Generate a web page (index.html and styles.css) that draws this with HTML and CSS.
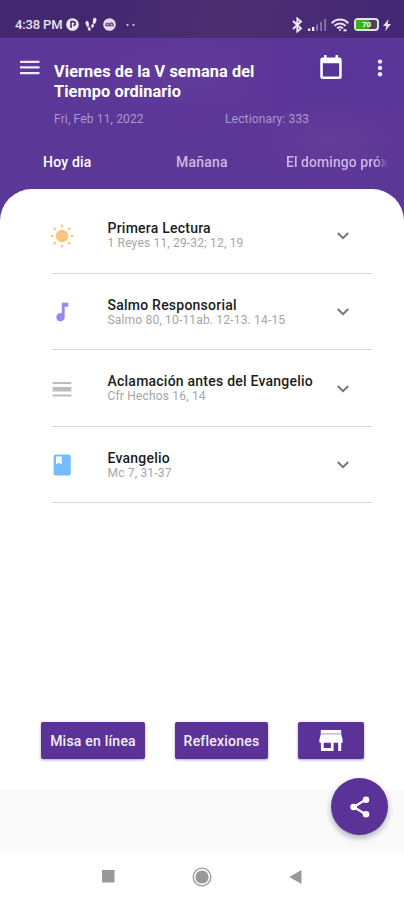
FILE: index.html
```html
<!DOCTYPE html>
<html lang="es">
<head>
  <meta charset="utf-8">
  <meta name="viewport" content="width=device-width, initial-scale=1.0">
  <title>Lecturas</title>
  <link rel="stylesheet" href="styles.css">
</head>
<body>

  <div class="top">
    <div class="status">
      <span class="time">4:38 PM</span>
      <svg class="st-p" width="13" height="13" viewBox="0 0 13 13"><circle cx="6.5" cy="6.5" r="6.3" fill="#efe9f7"/><path d="M5 10V3.600h2.300a1.900 1.900 0 0 1 0 3.800" fill="none" stroke="#46296f" stroke-width="1.600"/></svg>
      <svg class="st-feet" width="12" height="15" viewBox="0 0 12 15" fill="#efe9f7"><path d="M.5 5.500C.8 3.500 3.300 3.300 3.700 5.500c.3 1.800 0 2.500.6 3.700l-2 .7C1.500 8.500.3 7.500.5 5.500zM2.600 10.800l2.100-.7c1.200 1.200 1.400 3.400.2 3.700-1.500.3-2-1.300-2.300-3zM11.500 3C11.500.3 8.600.2 8.100 2.500c-.3 1.800 0 2.500-.6 3.700l2.200.7C10.600 5.500 11.500 4.500 11.500 3zM9.200 7.800L7.100 7.100C5.900 8.300 5.700 10.300 6.900 10.700c1.500.3 2-1.300 2.300-2.900z"/></svg>
      <svg class="st-face" width="13" height="13" viewBox="0 0 13 13"><circle cx="6.500" cy="6.500" r="6.300" fill="#e4dcec"/><path d="M2.800 7.500c0-3 2.800-3 3.500-.5 1-3 4-2.500 4 .5z" fill="none" stroke="#6b4f91" stroke-width="1.300"/></svg>
      <svg class="st-dots" width="10" height="4" viewBox="0 0 10 4" fill="#d9cfe6"><circle cx="1.500" cy="2" r="1.100"/><circle cx="7.500" cy="2" r="1.100"/></svg>
      <div class="status-right">
        <svg width="11" height="16" viewBox="0 0 11 16" fill="none" stroke="#f3eef8" stroke-width="1.800"><path d="M1 4l8 7.500L5.300 14.500V1.500L9 4.500 1 12"/></svg>
        <svg class="st-signal" width="19" height="12" viewBox="0 0 19 12"><path fill="#f3eef8" d="M0 9.500h2.300V12H0zM4 8h2.300v4H4z"/><path fill="#8a76a8" d="M8.200 5.500h1.800V12H8.200zM12.200 3h1.800v9h-1.800zM16.300 0h1.800v12h-1.800z"/></svg>
        <svg class="st-wifi" width="18" height="14" viewBox="0 0 18 14" fill="none" stroke="#ece4f4" stroke-width="2.100"><path d="M.7 5.200C5.300.2 12.700.2 17.300 5.200M3.400 7.900c3.100-3.300 8.100-3.300 11.200 0M6.100 10.400c1.600-1.700 4.200-1.700 5.800 0"/><circle cx="9" cy="12" r="1" fill="#ece4f4" stroke="none"/><path d="M12.500 12.300h3" /></svg>
        <span class="battery"><span class="battery-fill"></span><span class="battery-num">70</span></span>
        <svg class="st-bolt" width="8" height="12" viewBox="0 0 8 12" fill="#e8dff2"><path d="M5.500 0L0 7h3.200L2.300 12 8 4.900H4.700z"/></svg>
      </div>
    </div>

    <header>
      <svg class="menu" width="20" height="15" viewBox="0 0 20 15" fill="#efe8fa"><path d="M0 .7h19.500v2.200H0zM0 6.300h19.500v2.200H0zM0 12h19.500v2.200H0z"/></svg>
      <div class="heading">
        <h1>Viernes de la V semana del<br>Tiempo ordinario</h1>
        <div class="meta">
          <span class="date">Fri, Feb 11, 2022</span>
          <span class="lectionary">Lectionary: 333</span>
        </div>
      </div>
      <svg class="calendar" width="22" height="25" viewBox="0 0 22 25" fill="#fff"><path fill-rule="evenodd" d="M4 0h2.500v2.500h9V0H18v2.500h1.500A2.200 2.200 0 0 1 21.700 4.700v17a2.200 2.200 0 0 1-2.200 2.200h-17A2.200 2.200 0 0 1 .3 21.700v-17A2.200 2.200 0 0 1 2.500 2.500H4zM2.800 8.300v13.200h16.400V8.300z"/></svg>
      <svg class="more" width="6" height="18" viewBox="0 0 6 18" fill="#efe8fa"><circle cx="3" cy="2.600" r="2.200"/><circle cx="3" cy="8.900" r="2.200"/><circle cx="3" cy="15.200" r="2.200"/></svg>
    </header>

    <nav class="tabs">
      <span class="tab active">Hoy dia</span>
      <span class="tab">Mañana</span>
      <span class="tab last">El domingo próx</span>
    </nav>
  </div>

  <main>
    <div class="reading">
      <svg class="icon" width="24" height="24" viewBox="0 0 24 24" fill="#fdc47d"><circle cx="12" cy="12" r="6.200"/><g stroke="#fdc47d" stroke-width="2.200" stroke-linecap="round"><path d="M12 1.600v.8M12 21.600v.8M1.600 12h.8M21.600 12h.8M4.500 4.500l.6.600M18.900 18.900l.6.600M4.500 19.500l.6-.6M18.900 5.100l.6-.6"/></g></svg>
      <div class="text">
        <h2>Primera Lectura</h2>
        <p>1 Reyes 11, 29-32; 12, 19</p>
      </div>
      <svg class="chevron" width="12" height="8" viewBox="0 0 12 8"><path d="M.8 1L6 6.200 11.200 1"/></svg>
    </div>
    <div class="reading">
      <svg class="icon" width="24" height="24" viewBox="0 0 24 24" fill="#9b86f3"><path d="M11.800 2.800h6.500v3.900h-3.600v10.500a4.200 4.200 0 1 1-2.900-4z"/></svg>
      <div class="text">
        <h2>Salmo Responsorial</h2>
        <p>Salmo 80, 10-11ab. 12-13. 14-15</p>
      </div>
      <svg class="chevron" width="12" height="8" viewBox="0 0 12 8"><path d="M.8 1L6 6.200 11.200 1"/></svg>
    </div>
    <div class="reading">
      <svg class="icon" width="24" height="24" viewBox="0 0 24 24" fill="#bdbdbd"><path d="M2.700 5h18.600v2H2.700zM2.700 17.400h18.600v2H2.700zM2.700 10.100h18.600v4.300H2.700z"/></svg>
      <div class="text">
        <h2>Aclamación antes del Evangelio</h2>
        <p>Cfr Hechos 16, 14</p>
      </div>
      <svg class="chevron" width="12" height="8" viewBox="0 0 12 8"><path d="M.8 1L6 6.200 11.200 1"/></svg>
    </div>
    <div class="reading">
      <svg class="icon" width="24" height="24" viewBox="0 0 24 24"><rect x="3.600" y="1.400" width="17.200" height="21.200" rx="2" fill="#75bdfd"/><path d="M6 3.500h5.800v8L8.900 9.800 6 11.500z" fill="#fff"/></svg>
      <div class="text">
        <h2>Evangelio</h2>
        <p>Mc 7, 31-37</p>
      </div>
      <svg class="chevron" width="12" height="8" viewBox="0 0 12 8"><path d="M.8 1L6 6.200 11.200 1"/></svg>
    </div>

    <div class="buttons">
      <button class="btn misa">Misa en línea</button>
      <button class="btn reflex">Reflexiones</button>
      <button class="btn store"><svg width="24" height="22" viewBox="0 0 24 22"><path d="M1.800 0h20.400v4H1.800z" fill="#fff"/><path d="M1.800 3h20.400v1.200H1.800z" fill="#cdbfe3"/><path fill="#fff" fill-rule="evenodd" d="M1.700 4.200h20.600l1.300 5.600v3h-1.400V21h-3v-8.200h-4.600V21H1.900v-8.200H.4v-3zM4.700 12.800v5.200h7.200v-5.200z"/></svg></button>
    </div>
  </main>

  <div class="strip">
    <button class="share"><svg width="20" height="22" viewBox="0 0 20 22" fill="#fff"><path d="M16 3.500L3.600 11 16 18.500" fill="none" stroke="#fff" stroke-width="2.100"/><circle cx="16" cy="3.800" r="3.300"/><circle cx="3.600" cy="11" r="3.300"/><circle cx="16" cy="18.200" r="3.300"/></svg></button>
  </div>

  <footer>
    <svg width="13" height="13" viewBox="0 0 13 13"><path d="M0 0h12.500v12.500H0z" fill="#999"/></svg>
    <svg width="20" height="20" viewBox="0 0 20 20"><circle cx="10" cy="10" r="8.800" fill="none" stroke="#999" stroke-width="1.300"/><circle cx="10" cy="10" r="6.600" fill="#999"/></svg>
    <svg width="13" height="14" viewBox="0 0 13 14"><path d="M12.500 0v14L.3 7z" fill="#999"/></svg>
  </footer>

</body>
</html>
```
FILE: styles.css
```css
body {
  margin: 0;
  width: 404px;
  height: 900px;
  overflow: hidden;
  background: #fff;
  font-family: Roboto, "Liberation Sans", sans-serif;
}
svg {
  display: block;
  flex: none;
}
h1, h2, p {
  margin: 0;
}
button {
  border: none;
  padding: 0;
  font-family: inherit;
  cursor: pointer;
}

/* header */
.top {
  height: 220px;
  background:
    radial-gradient(ellipse 90px 40px at 330px 140px, rgba(125, 70, 155, 0.3), transparent),
    radial-gradient(ellipse 120px 50px at 190px 75px, rgba(115, 70, 160, 0.3), transparent),
    radial-gradient(ellipse 110px 45px at 330px 75px, rgba(80, 45, 155, 0.35), transparent),
    #5b3798;
}
.status {
  height: 38px;
  box-sizing: border-box;
  padding: 11px 13px 0 15px;
  display: flex;
  align-items: center;
  background: linear-gradient(100deg, #43276f 0%, #432870 25%, #4c2e70 55%, #432775 100%);
}
.time {
  width: 51px;
  color: #e9e1f2;
  font-size: 13px;
  font-weight: 500;
  letter-spacing: -0.15px;
  white-space: nowrap;
}
.st-feet {
  margin-left: 6px;
}
.st-face {
  margin-left: 6px;
}
.st-dots {
  margin-left: 10px;
}
.status-right {
  display: flex;
  align-items: center;
  margin-left: auto;
}
.st-signal {
  margin-left: 5px;
}
.st-wifi {
  margin-left: 4px;
}
.battery {
  position: relative;
  width: 25px;
  height: 13px;
  box-sizing: border-box;
  margin-left: 5px;
  border: 2px solid #e6dded;
  border-radius: 4px;
  background: #4c4360;
}
.battery-fill {
  display: block;
  width: 13px;
  height: 9px;
  background: #3db11c;
}
.battery-num {
  position: absolute;
  top: 0;
  left: 0;
  width: 21px;
  color: #fff;
  font-size: 8px;
  font-weight: 700;
  line-height: 9px;
  text-align: center;
}
.st-bolt {
  margin-left: 4px;
}

header {
  display: flex;
  align-items: flex-start;
  height: 104px;
}
.menu {
  margin: 22px 14px 0 20px;
}
.heading {
  width: 266px;
  padding-top: 24px;
}
h1 {
  color: #fff;
  font-size: 16.3px;
  font-weight: 700;
  line-height: 20px;
  letter-spacing: 0.1px;
  white-space: nowrap;
}
.meta {
  display: flex;
  margin-top: 9px;
  color: #ab98cd;
  font-size: 12px;
  line-height: 16px;
  letter-spacing: 0.15px;
}
.date {
  width: 171px;
}
.calendar {
  margin-top: 17px;
}
.more {
  margin: 21px 0 0 35px;
}
.tabs {
  display: flex;
  padding: 10px 0 0 43px;
  line-height: 20px;
}
.tab {
  flex: none;
  width: 133px;
  color: #c9b8e4;
  font-size: 14px;
  font-weight: 500;
  letter-spacing: 0.2px;
  white-space: nowrap;
}
.tab.active {
  color: #fff;
}
.tab.last {
  width: auto;
  margin-left: -23px;
  letter-spacing: 0.05px;
  -webkit-mask-image: linear-gradient(90deg, #000 90px, transparent 102px);
  mask-image: linear-gradient(90deg, #000 90px, transparent 102px);
}

/* white sheet */
main {
  position: relative;
  height: 601px;
  box-sizing: border-box;
  margin-top: -31px;
  padding: 8px 32px 0 52px;
  background: #fff;
  border-radius: 32px 32px 0 0;
}
.reading {
  display: flex;
  align-items: center;
  height: 76.5px;
  box-sizing: border-box;
  padding-top: 2px;
  border-bottom: 1px solid #d6d6d9;
}
.icon {
  margin-left: -2px;
}
.text {
  width: 229px;
  margin-left: 33.5px;
}
h2 {
  color: #1c1c1c;
  font-size: 14px;
  font-weight: 500;
  line-height: 16px;
  letter-spacing: 0.23px;
  white-space: nowrap;
}
.text p {
  color: #a5a5a5;
  font-size: 12px;
  line-height: 15px;
  letter-spacing: 0.18px;
}
.chevron path {
  fill: none;
  stroke: #757575;
  stroke-width: 2;
}
.buttons {
  display: flex;
  margin: 219px 0 0 -11px;
}
.btn {
  display: flex;
  align-items: center;
  justify-content: center;
  height: 37px;
  color: #f3effa;
  font-size: 14px;
  font-weight: 500;
  letter-spacing: 0.22px;
  background: #5b3297;
  border-radius: 2px;
  box-shadow: 0 1px 3px rgba(0, 0, 0, 0.35);
}
.misa {
  width: 104px;
}
.reflex {
  width: 93px;
  margin-left: 30px;
}
.store {
  width: 66px;
  margin-left: 30px;
}

/* bottom */
.strip {
  position: relative;
  height: 63px;
  background: #fafafa;
}
.share {
  position: absolute;
  top: -12px;
  left: 331px;
  display: flex;
  align-items: center;
  justify-content: center;
  width: 57px;
  height: 57px;
  border-radius: 50%;
  background: #5b3297;
  box-shadow: 0 3px 6px rgba(0, 0, 0, 0.3);
}
footer {
  display: flex;
  align-items: center;
  justify-content: space-between;
  height: 47px;
  padding: 0 102px;
  background: #fff;
}
```
